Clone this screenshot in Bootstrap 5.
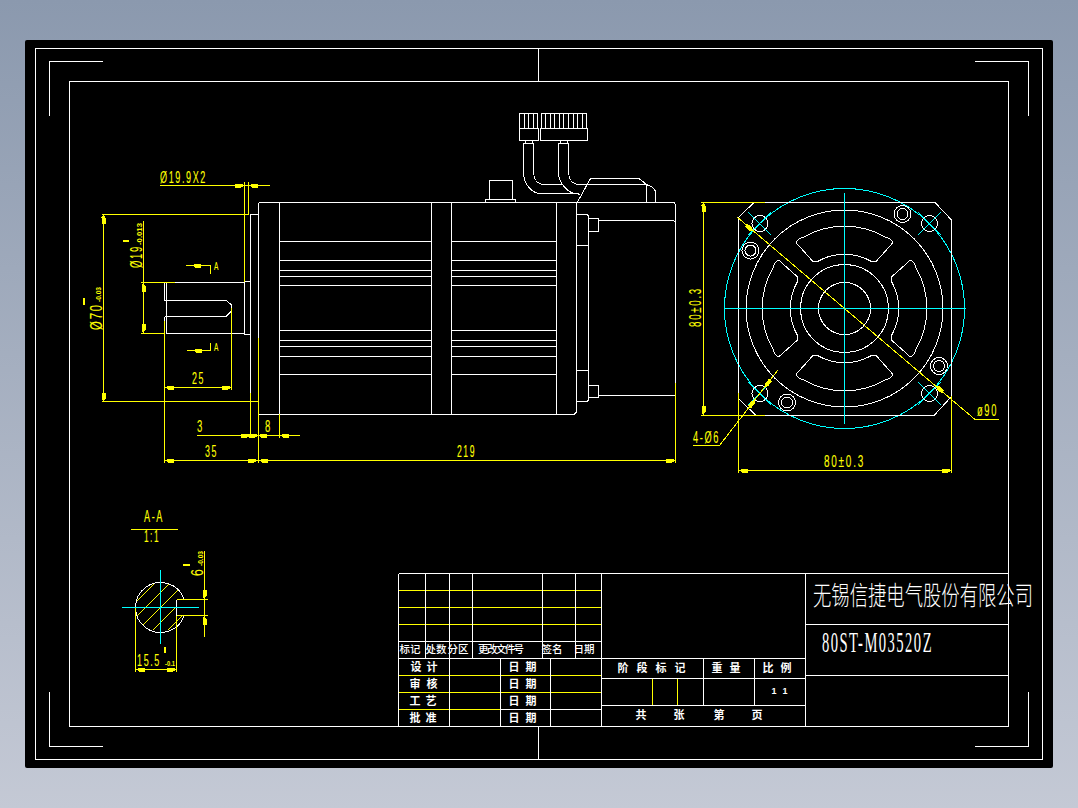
<!DOCTYPE html>
<html lang="zh">
<head>
<meta charset="utf-8">
<title>80ST-M03520Z</title>
<link rel="stylesheet" href="https://cdn.jsdelivr.net/npm/bootstrap@5.3.0/dist/css/bootstrap.min.css">
<style>
html,body{height:100%}
.cad-desk{background:linear-gradient(180deg,#8b99ae 0%,#c4c9d5 100%);padding:40px 25px}
.cad-sheet{width:1028px;height:728px;background:#000;border-radius:2px}
.cad-sheet svg{display:block;width:1028px;height:728px}
.wl{stroke:#fff;fill:none;stroke-width:1;shape-rendering:crispEdges}
.yl{stroke:#ff0;fill:none;stroke-width:1;shape-rendering:crispEdges}
.cy{stroke:#0ff;fill:none;stroke-width:1;shape-rendering:crispEdges}
.yf{fill:#ff0;shape-rendering:crispEdges}
.dt{fill:#ff0;stroke:#ff0;stroke-width:.1px;font-family:"Liberation Sans",sans-serif;font-size:17px;letter-spacing:3px}
.dt-s{font-size:11px;letter-spacing:1px}
.tol{fill:#ff0;font-family:"Liberation Sans",sans-serif;font-size:8px;font-weight:700}
.cj{fill:#fff;font-family:"Liberation Sans","Noto Sans CJK SC",sans-serif;font-size:11px;font-weight:700;text-anchor:middle}
.cn{font-size:10.5px;font-weight:500}
.cj-num{font-size:9px}
.co{fill:#fff;font-family:"Noto Sans CJK SC",sans-serif;font-size:26px;font-weight:300}
.pn{fill:#fff;font-family:"Liberation Serif",serif;font-size:30px;letter-spacing:3px}
</style>
</head>
<body class="cad-desk d-flex m-0 overflow-hidden">
<main class="cad-sheet flex-shrink-0">
<svg viewBox="25 40 1028 728" xmlns="http://www.w3.org/2000/svg" role="img" aria-label="80ST-M03520Z">
<defs>
<path id="ah" d="M0 0L-3 -2H-9V2H-3Z" class="yf"/>
<clipPath id="hatch"><path d="M184.2 599.5H176.5V615.5H184.2A25 25 0 1 1 184.2 599.5Z"/></clipPath>
<path id="win" class="wl" d="M-41 -71.4A82.3 82.3 0 0 1 41 -71.4Q47 -70 48.3 -65.7L32 -47.5Q30 -46 27 -47A54.2 54.2 0 0 0 -27 -47Q-30 -46 -32 -47.5L-48.3 -65.7Q-47 -70 -41 -71.4Z"/>
</defs>

<!-- frames -->
<path class="wl" d="M35.5 48.5H1042.5V759.5H35.5Z"/>
<path class="wl" d="M69.5 81.5H1008.5V726.5H69.5Z"/>
<path class="wl" d="M49.5 116V61.5H103M975 61.5H1028.5V116M49.5 692V746.5H103M975 746.5H1028.5V692"/>
<path class="wl" d="M538.5 48.5V81.5M538.5 726.5V759.5"/>

<!-- side view -->
<path class="wl" d="M258.5 202.5H674L675.5 205V395L674 395.5H598.5M675.5 222L673 220.5H598.5"/>
<path class="wl" d="M258.5 202.5V414.5H574L576.5 412V202.5M279.5 202.5V414.5M431.5 202.5V414.5M451.5 202.5V414.5M556.5 202.5V414.5"/>
<path class="wl" d="M279.5 241.5H431.5M279.5 260.5H431.5M279.5 270.5H431.5M279.5 276.5H431.5M279.5 285.5H431.5M279.5 330.5H431.5M279.5 340.5H431.5M279.5 346.5H431.5M279.5 356.5H431.5M279.5 374.5H431.5"/>
<path class="wl" d="M451.5 241.5H556.5M451.5 260.5H556.5M451.5 270.5H556.5M451.5 276.5H556.5M451.5 285.5H556.5M451.5 330.5H556.5M451.5 340.5H556.5M451.5 346.5H556.5M451.5 356.5H556.5M451.5 374.5H556.5"/>
<path class="wl" d="M576.5 214.5H587L588.5 216V400L587 401.5H576.5M576.5 245.5H588.5M576.5 370.5H588.5M588.5 218.5H598.5V231.5H588.5M588.5 385.5H598.5V397.5H588.5"/>
<path class="wl" d="M258.5 214.5H250.5V401.5H258.5M250.5 281.5H244.5V334.5H250.5M244.5 282.5H166.5V333.5H244.5M166.5 282.5V300.5M166.5 316.5V333.5M164.5 282.5V300.5M164.5 316.5V333.5"/>
<path class="wl" d="M164.5 300.5H226.5L231.5 305V311L226 316.5H164.5"/>
<!-- connector and cables -->
<path class="wl" d="M519.5 128.5H538.5V140.5H519.5ZM540.5 128.5H587.5V140.5H540.5Z"/>
<path class="wl" d="M519.5 128V113.5H537.5V128M524.5 113.5V128M528.5 113.5V128M533.5 113.5V128"/>
<path class="wl" d="M541.5 128V113.5H586.5V128M545.5 113.5V128M550.5 113.5V128M554.5 113.5V128M559.5 113.5V128M563.5 113.5V128M568.5 113.5V128M573.5 113.5V128M577.5 113.5V128M582.5 113.5V128"/>
<path class="wl" d="M525.5 140.5V143M532.5 140.5V143M560.5 140.5V143M567.5 140.5V143"/>
<path class="wl" d="M533.5 143.5H523.5V173C524 184 531 192 538.5 193.5H577L580 194.5M533.5 143.5V173C534 180 538 184 543 184.5H562"/>
<path class="wl" d="M568.5 143.5H558.5V173C559 183 566 191 575 194M568.5 143.5V173C569 180 573 184 578 184.5H646.5L652 187L655.5 191V202.5M646.5 184.5V202.5"/>
<path class="wl" d="M577.5 202L590.5 178.5H639L646.5 184.5"/>
<path class="wl" d="M489.5 199.5V180.5H512.5V199.5M485.5 202.5V199.5H515.5V202.5"/>

<!-- side view dimensions -->
<path class="yl" d="M160 185.5H270M244.5 182V281.5M248.5 182V214.5M101.5 214.5H248.5M101.5 401.5H258.5M103.5 214.5V401.5"/>
<path class="yl" d="M143.5 221V333.5M141 282.5H175M141 333.5H165M164.5 321V463M231.5 308V390M164.5 387.5H231.5"/>
<path class="yl" d="M197 435.5H300M250.5 393V438M258.5 338V463M279.5 414V438M164.5 460.5H675.5M675.5 383V463"/>
<path class="yl" d="M186 265.5H210.5V274M187 350.5H210.5V343"/>
<use href="#ah" transform="translate(244 185.5)"/><use href="#ah" transform="translate(249 185.5) rotate(180)"/>
<use href="#ah" transform="translate(103.5 214.5) rotate(-90)"/><use href="#ah" transform="translate(103.5 401.5) rotate(90)"/>
<use href="#ah" transform="translate(143.5 283) rotate(-90)"/><use href="#ah" transform="translate(143.5 333) rotate(90)"/>
<use href="#ah" transform="translate(165 387.5) rotate(180)"/><use href="#ah" transform="translate(231 387.5)"/>
<use href="#ah" transform="translate(192 265.5) rotate(180)"/><use href="#ah" transform="translate(193 350.5) rotate(180)"/>
<use href="#ah" transform="translate(250 435.5)"/><use href="#ah" transform="translate(258 435.5)"/>
<use href="#ah" transform="translate(258 435.5) rotate(180)"/><use href="#ah" transform="translate(280 435.5) rotate(180)"/>
<use href="#ah" transform="translate(165 460.5) rotate(180)"/><use href="#ah" transform="translate(257 460.5)"/>
<use href="#ah" transform="translate(259 460.5) rotate(180)"/><use href="#ah" transform="translate(675 460.5)"/>

<text class="dt" x="160" y="183" textLength="47" lengthAdjust="spacingAndGlyphs">Ø19.9X2</text>
<text class="dt" x="192" y="384" textLength="13" lengthAdjust="spacingAndGlyphs">25</text>
<text class="dt" x="197" y="432" textLength="7" lengthAdjust="spacingAndGlyphs">3</text>
<text class="dt" x="265" y="432" textLength="7" lengthAdjust="spacingAndGlyphs">8</text>
<text class="dt" x="205" y="457" textLength="13" lengthAdjust="spacingAndGlyphs">35</text>
<text class="dt" x="457" y="457" textLength="19" lengthAdjust="spacingAndGlyphs">219</text>
<text class="dt dt-s" x="214" y="270" textLength="5" lengthAdjust="spacingAndGlyphs">A</text>
<text class="dt dt-s" x="214" y="351" textLength="5" lengthAdjust="spacingAndGlyphs">A</text>
<text class="dt" transform="translate(102 330) rotate(-90)" textLength="27" lengthAdjust="spacingAndGlyphs">Ø70</text>
<text class="tol" transform="translate(101 302) rotate(-90)" textLength="15" lengthAdjust="spacingAndGlyphs">-0.03</text>
<path class="yf" d="M83 298h2v7h-2Z"/>
<text class="dt" transform="translate(142 268) rotate(-90)" textLength="23" lengthAdjust="spacingAndGlyphs">Ø19</text>
<text class="tol" transform="translate(142 245) rotate(-90)" textLength="22" lengthAdjust="spacingAndGlyphs">-0.013</text>
<path class="yf" d="M122.5 240h6.5v2h-6.5Z"/>

<!-- front view -->
<circle class="cy" cx="844.5" cy="308.5" r="120"/>
<path class="wl" d="M738.5 217.5L754 202.5H935L951.5 220V396.5L934 415.5H756L738.5 398.5Z"/>
<g transform="translate(844.5 308.5)">
<circle class="wl" r="98.5"/><circle class="wl" r="44"/><circle class="wl" r="26"/>
<use href="#win"/><use href="#win" transform="rotate(90)"/><use href="#win" transform="rotate(180)"/><use href="#win" transform="rotate(270)"/>
</g>
<circle class="wl" cx="760" cy="223.5" r="8"/><circle class="wl" cx="929.5" cy="223.5" r="8"/>
<circle class="wl" cx="760" cy="393.5" r="8"/><circle class="wl" cx="929.5" cy="393.5" r="8"/>
<circle class="wl" cx="902.5" cy="214" r="8.5"/><circle class="wl" cx="902.5" cy="214" r="5.5"/>
<circle class="wl" cx="750.5" cy="250.5" r="8.5"/><circle class="wl" cx="750.5" cy="250.5" r="5.5"/>
<circle class="wl" cx="939" cy="366" r="8.5"/><circle class="wl" cx="939" cy="366" r="5.5"/>
<circle class="wl" cx="787" cy="402.5" r="8.5"/><circle class="wl" cx="787" cy="402.5" r="5.5"/>
<path class="cy" d="M724.5 308.5H965.5M844.5 192.5V423.5"/>
<path class="cy" d="M748 212L771 235M771 212L748 235M918 212L941 235M941 212L918 235M748 382L771 405M771 382L748 405M918 382L941 405M941 382L918 405"/>
<path class="yl" d="M700.5 202.5H765M700.5 415.5H765M703.5 202.5V415.5"/>
<path class="yl" d="M738.5 393V473M951.5 396V473M738.5 470.5H951.5"/>
<path class="yl" d="M737 217L975 419.5H999M693 445.5H719.5L777.5 370.5"/>
<use href="#ah" transform="translate(703.5 202.5) rotate(-90)"/><use href="#ah" transform="translate(703.5 415) rotate(90)"/>
<use href="#ah" transform="translate(739 470.5) rotate(180)"/><use href="#ah" transform="translate(951 470.5)"/>
<use href="#ah" transform="translate(753 231) rotate(40)"/><use href="#ah" transform="translate(936 386) rotate(220)"/>
<use href="#ah" transform="translate(755 400) rotate(-52)"/><use href="#ah" transform="translate(765 387) rotate(128)"/>
<text class="dt" transform="translate(701 327) rotate(-90)" textLength="40" lengthAdjust="spacingAndGlyphs">80±0.3</text>
<text class="dt" x="824" y="467" textLength="41" lengthAdjust="spacingAndGlyphs">80±0.3</text>
<text class="dt" x="977" y="416" textLength="21" lengthAdjust="spacingAndGlyphs">ø90</text>
<text class="dt" x="693" y="443" textLength="27" lengthAdjust="spacingAndGlyphs">4-Ø6</text>

<!-- section A-A -->
<text class="dt" x="144" y="522" textLength="20" lengthAdjust="spacingAndGlyphs">A-A</text>
<path class="yl" d="M131 529.5H178"/>
<text class="dt" x="144" y="542" textLength="16" lengthAdjust="spacingAndGlyphs">1:1</text>
<g clip-path="url(#hatch)"><path class="yl" d="M108 630L168 570M123 630L183 570M138 630L198 570M153 630L213 570M168 630L228 570"/></g>
<path class="wl" d="M184.2 599.5A25 25 0 1 0 184.2 615.5M176.5 599.5V615.5"/>
<path class="yl" d="M176.5 599.5H208M176.5 615.5H208M204.5 551V636.5M135.5 607.5V671.5M176.5 615.5V671.5M135.5 669.5H176.5"/>
<path class="cy" d="M122 607.5H199M160.5 570V644"/>
<use href="#ah" transform="translate(204.5 599) rotate(90)"/><use href="#ah" transform="translate(204.5 616) rotate(-90)"/>
<use href="#ah" transform="translate(136 669.5) rotate(180)"/><use href="#ah" transform="translate(176 669.5)"/>
<text class="dt" transform="translate(203 576) rotate(-90)" textLength="9" lengthAdjust="spacingAndGlyphs">6</text>
<text class="tol" transform="translate(203 566) rotate(-90)" textLength="15" lengthAdjust="spacingAndGlyphs">-0.03</text>
<path class="yf" d="M183 564h7v2h-7Z"/>
<text class="dt" x="137" y="666" textLength="24" lengthAdjust="spacingAndGlyphs">15.5</text>
<text class="tol" x="165" y="666" textLength="10" lengthAdjust="spacingAndGlyphs">-0.1</text>
<path class="yf" d="M164 647h2v6h-2Z"/>

<!-- title block -->
<path class="yl" d="M398.5 590.5H601.5M398.5 607.5H601.5M398.5 624.5H601.5M398.5 675.5H601.5M398.5 692.5H601.5M398.5 709.5H500.5M652.5 678V705M677.5 678V705"/>
<path class="wl" d="M398.5 573.5H1008.5M398.5 641.5H601.5M398.5 658.5H805.5M500.5 709.5H601.5M398.5 573.5V726.5M425.5 573.5V658.5M449.5 573.5V726.5M472.5 573.5V658.5M542.5 573.5V658.5M575.5 573.5V658.5M601.5 573.5V726.5M500.5 658.5V726.5M550.5 658.5V726.5"/>
<path class="wl" d="M601.5 678.5H805.5M601.5 705.5H805.5M703.5 658.5V705.5M754.5 658.5V705.5M805.5 573.5V726.5M805.5 624.5H1008.5M805.5 675.5H1008.5"/>

<text class="cj cn" x="410" y="653">标记</text>
<text class="cj cn" x="436" y="653">处数</text>
<text class="cj cn" x="458" y="653">分区</text>
<text class="cj cn" x="501" y="653" textLength="46" lengthAdjust="spacing">更改文件号</text>
<text class="cj cn" x="552" y="653">签名</text>
<text class="cj cn" x="584" y="653">日期</text>
<g>
<text class="cj" x="416" y="671">设</text><text class="cj" x="432" y="671">计</text>
<text class="cj" x="415" y="688">审</text><text class="cj" x="432" y="688">核</text>
<text class="cj" x="415" y="705">工</text><text class="cj" x="431" y="705">艺</text>
<text class="cj" x="415" y="722">批</text><text class="cj" x="431" y="722">准</text>
<text class="cj" x="514" y="671">日</text><text class="cj" x="531" y="671">期</text>
<text class="cj" x="514" y="688">日</text><text class="cj" x="531" y="688">期</text>
<text class="cj" x="514" y="705">日</text><text class="cj" x="531" y="705">期</text>
<text class="cj" x="514" y="722">日</text><text class="cj" x="531" y="722">期</text>
</g>
<text class="cj" x="623" y="672">阶</text><text class="cj" x="642" y="672">段</text><text class="cj" x="661" y="672">标</text><text class="cj" x="680" y="672">记</text>
<text class="cj" x="717" y="672">重</text><text class="cj" x="735" y="672">量</text>
<text class="cj" x="768" y="672">比</text><text class="cj" x="786" y="672">例</text>
<text class="cj cj-num" x="774" y="694">1</text><text class="cj cj-num" x="785" y="694">1</text>
<text class="cj" x="641" y="719">共</text><text class="cj" x="679" y="719">张</text><text class="cj" x="719" y="719">第</text><text class="cj" x="757" y="719">页</text>
<text class="co" x="813" y="605" textLength="220" lengthAdjust="spacingAndGlyphs">无锡信捷电气股份有限公司</text>
<text class="pn" x="822" y="652" textLength="111" lengthAdjust="spacingAndGlyphs">80ST-M03520Z</text>
</svg>
</main>
<script src="https://cdn.jsdelivr.net/npm/bootstrap@5.3.0/dist/js/bootstrap.bundle.min.js"></script>
</body>
</html>
